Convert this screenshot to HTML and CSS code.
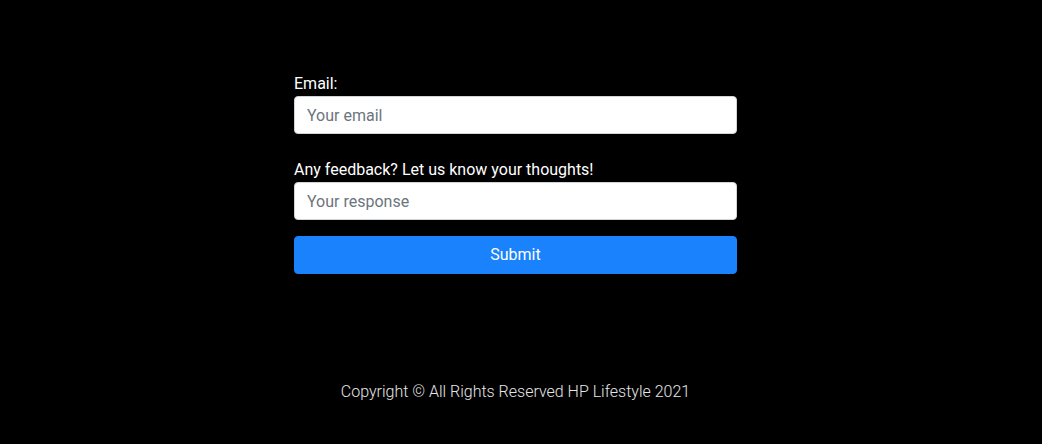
FILE: index.html
```html
<!DOCTYPE html>
<html lang="en">
<head>
<meta charset="utf-8">
<title>Feedback</title>
<link rel="stylesheet" href="styles.css">
</head>
<body>
<main class="page">
  <form class="form">
    <div class="field">
      <label class="label" for="email">Email:</label>
      <input class="input" id="email" type="email" placeholder="Your email">
    </div>
    <div class="field">
      <label class="label" for="resp">Any feedback? Let us know your thoughts!</label>
      <input class="input" id="resp" type="text" placeholder="Your response">
    </div>
    <button class="btn" type="button">Submit</button>
  </form>
</main>
<footer class="footer">Copyright © All Rights Reserved HP Lifestyle 2021</footer>
</body>
</html>
```
FILE: styles.css
```css
* { box-sizing: border-box; }
html, body { margin: 0; padding: 0; }
body {
  background: #000;
  color: #fff;
  font-family: Roboto, "Liberation Sans", sans-serif;
  font-size: 16px;
  line-height: 24px;
  width: 1031px;
  height: 444px;
  overflow: hidden;
}
.page {
  display: flex;
  justify-content: center;
  padding-top: 72px;
}
.form {
  width: 443px;
  display: flex;
  flex-direction: column;
}
.field {
  display: flex;
  flex-direction: column;
  margin-bottom: 24px;
}
.field:nth-child(2) { margin-bottom: 16px; }
.label {
  display: block;
  font-size: 16px;
  line-height: 24px;
  color: #fff;
}
.input {
  height: 38px;
  width: 100%;
  padding: 6px 12px;
  font-family: Roboto, "Liberation Sans", sans-serif;
  font-size: 16px;
  line-height: 24px;
  color: #212529;
  background: #fff;
  border: 1px solid #ced4da;
  border-radius: 4px;
  outline: none;
}
.input::placeholder { color: #6c757d; opacity: 1; }
.btn {
  height: 38px;
  width: 100%;
  border: 1px solid #1982fc;
  background: #1982fc;
  color: #fff;
  border-radius: 4px;
  font-family: Roboto, "Liberation Sans", sans-serif;
  font-size: 16px;
  line-height: 24px;
  font-weight: 400;
  padding: 6px 12px;
}
.footer {
  margin-top: 106px;
  text-align: center;
  font-weight: 300;
  color: #e6e6e6;
  font-size: 16px;
  line-height: 24px;
}
```
